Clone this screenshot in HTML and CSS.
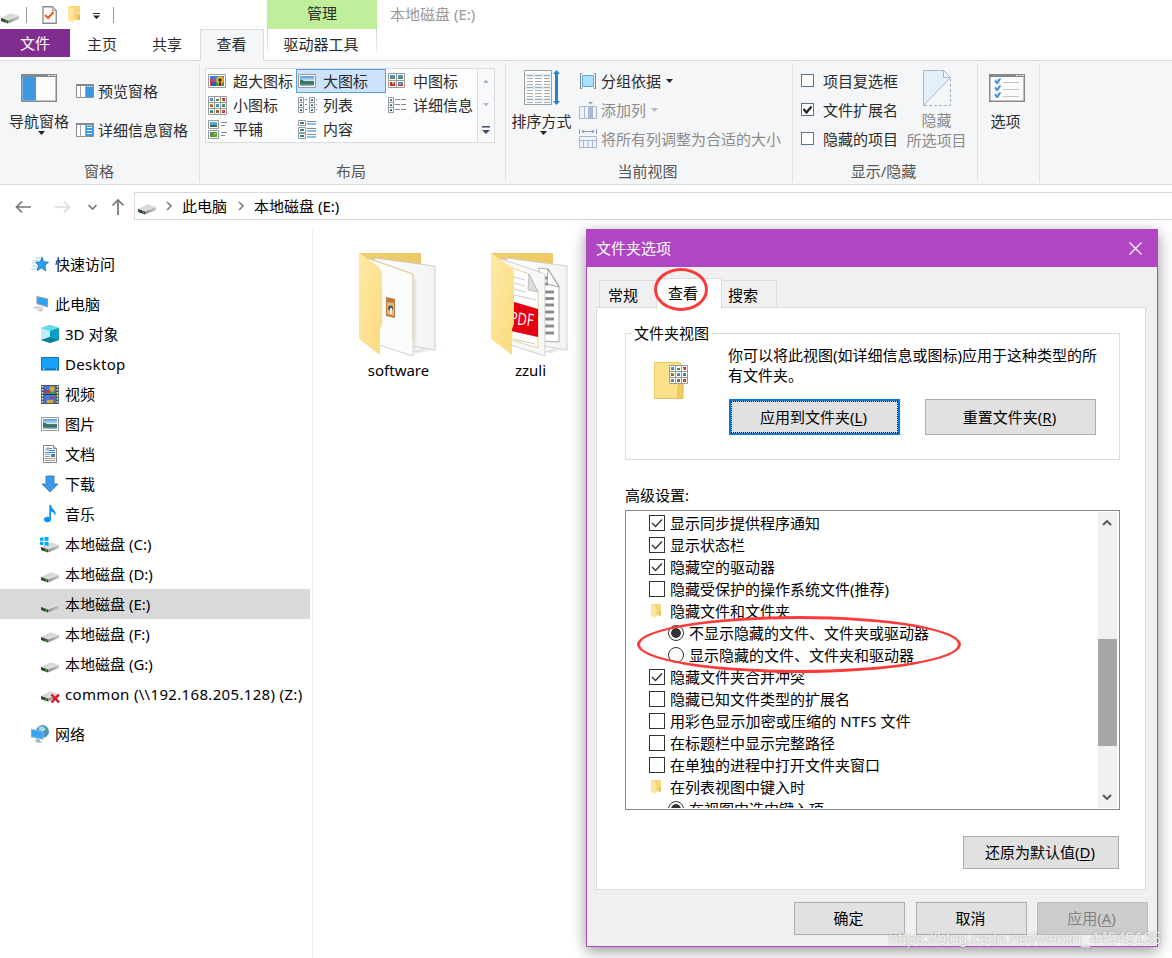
FILE: index.html
```
<!DOCTYPE html>
<html lang="zh-CN">
<head>
    <meta charset="UTF-8">
    <meta name="viewport" content="width=device-width, initial-scale=1.0">
    <title>本地磁盘 (E:)</title>
    <link rel="stylesheet" href="styles.css">
</head>
<body>
    <!-- shared icons -->
    <svg class="sprite" width="0" height="0">
        <defs>
            <linearGradient id="sky" x1="0" y1="0" x2="0" y2="1">
                <stop offset="0" stop-color="#4f95e0"/>
                <stop offset=".5" stop-color="#d6ecfb"/>
                <stop offset=".55" stop-color="#4c7f6a"/>
                <stop offset=".75" stop-color="#3c6c74"/>
                <stop offset="1" stop-color="#9cc4dc"/>
            </linearGradient>
            <linearGradient id="driveTop" x1="0" y1="0" x2="1" y2="1">
                <stop offset="0" stop-color="#c9c9c9"/>
                <stop offset="1" stop-color="#eeeeee"/>
            </linearGradient>
            <linearGradient id="driveSide" x1="0" y1="0" x2="1" y2="0">
                <stop offset="0" stop-color="#8f8f8f"/>
                <stop offset="1" stop-color="#c6c6c6"/>
            </linearGradient>
            <linearGradient id="folderFront" x1="0" y1="0" x2="1" y2="1">
                <stop offset="0" stop-color="#ffe9a6"/>
                <stop offset="1" stop-color="#fada7c"/>
            </linearGradient>
            <linearGradient id="folderBack" x1="0" y1="0" x2="1" y2="0">
                <stop offset="0" stop-color="#f0cd6c"/>
                <stop offset="1" stop-color="#ecca68"/>
            </linearGradient>
            <linearGradient id="paper" x1="0" y1="0" x2="1" y2="0">
                <stop offset="0" stop-color="#ffffff"/>
                <stop offset="1" stop-color="#f3f3f3"/>
            </linearGradient>
            <linearGradient id="shade" x1="0" y1="0" x2="1" y2="0">
                <stop offset="0" stop-color="#bbbbbb"/>
                <stop offset="1" stop-color="#ffffff" stop-opacity="0"/>
            </linearGradient>
        </defs>
        <symbol id="drive" viewBox="0 0 18 12">
            <path d="M0 6L9 1.700Q10 1.500 11 1.700L18 3.700V4.500L7 9Z" fill="url(#driveTop)"/>
            <path d="M0 6L7 8.500V11.500L1 9.500Q0 9 0 8.500Z" fill="#3c403c"/>
            <path d="M7 8.500L18 4V7L7 11.500Z" fill="url(#driveSide)"/>
            <path d="M4.500 8.500h1.500v2h-1.500z" fill="#3fc03f"/>
        </symbol>
        <symbol id="smallFolder" viewBox="0 0 12 17">
            <path d="M1 0H12V14H1Z" fill="#f5d67c"/>
            <path d="M0 0L5.500 2V17L0 14.500Z" fill="#ffe59b"/>
            <path d="M9.500 9h2.500v5H9.500z" fill="#e6bd58"/>
        </symbol>
        <symbol id="picture" viewBox="0 0 18 14">
            <path d="M.5.5h17v13H.5z" fill="#fff" stroke="#999"/>
            <path d="M2 2h14v10H2z" fill="url(#sky)"/>
            <path d="M2 5.500Q4 5 6 7T13 8.500L16 9V10H2Z" fill="#3b7456"/>
        </symbol>
        <symbol id="tile" viewBox="0 0 6 6">
            <path d="M.5.5h5v5h-5z" fill="#fff" stroke="#9a9a9a"/>
            <path d="M2 2h2v1H2z" fill="#5b9bd8"/>
            <path d="M2 3h2v1H2z" fill="#33604e"/>
        </symbol>
        <symbol id="grid9" viewBox="0 0 19 19">
            <path d="M.5.5h18v18H.5z" fill="#fff" stroke="#9a9a9a"/>
            <path d="M6.500 0v19M12.500 0v19M0 6.500h19M0 12.500h19" stroke="#9a9a9a" fill="none"/>
            <path d="M2 2h3v2H2zM8 8h3v2H8zM2 14h3v1H2zM14 8h3v1h-3z" fill="#4d92dc"/>
            <path d="M2 4h3v1H2zM8 3h3v2H8zM8 10h3v1H8zM14 9h3v2h-3zM2 15h3v2H2z" fill="#4b8a55"/>
            <path d="M14 2h3v3h-3zM14 14h3v3h-3z" fill="#c4282b"/>
            <path d="M2 8h3v3H2zM8 14h3v3H8z" fill="#876a35"/>
            <path d="M14 3h1v2h-1zM3 8h2v1H3zM15 15h1v1h-1z" fill="#e8b13b"/>
        </symbol>
        <symbol id="chevron" viewBox="0 0 8 10">
            <path d="M2 1L6 5L2 9" fill="none" stroke="#777" stroke-width="1.500"/>
        </symbol>
        <symbol id="pane" viewBox="0 0 36 28">
            <path d="M.75.75h34.500v26.500H.75z" fill="#fbfbfb" stroke="#85898c" stroke-width="1.500"/>
            <path d="M0 0h36v3H0z" fill="#85898c"/>
            <path d="M27 1h2v1h-2zM30 1h2v1h-2zM33 1h2v1h-2z" fill="#eee"/>
        </symbol>
        <symbol id="check" viewBox="0 0 16 16">
            <path d="M3 8L6.500 11.500L13 4.500" fill="none" stroke="#333" stroke-width="1.400"/>
        </symbol>
    </svg>

    <div class="explorer">
        <header class="header">
            <div class="left-head">
                <div class="quick">
                    <svg class="q-drive" width="18" height="12"><use href="#drive"/></svg>
                    <i class="q-sep"></i>
                    <svg class="q-doc" width="15" height="18" viewBox="0 0 15 18">
                        <path d="M1 .75H10.500L14.250 4.500V17.250H1Z" fill="#fdfdfd" stroke="#8b8b8b" stroke-width="1.300"/>
                        <path d="M10.500 1V4.500H14" fill="#ddd" stroke="#8b8b8b" stroke-width=".8"/>
                        <path d="M3 9L6 12L11.500 6" fill="none" stroke="#f05a1e" stroke-width="2"/>
                    </svg>
                    <svg class="q-folder" width="12" height="17"><use href="#smallFolder"/></svg>
                    <svg class="q-more" width="7" height="6" viewBox="0 0 7 6"><path d="M0 0h7v1H0zM0 2.500h7L3.500 6Z" fill="#222"/></svg>
                    <i class="q-sep"></i>
                </div>
                <nav class="tabs">
                    <div class="tab file">文件</div>
                    <div class="tab">主页</div>
                    <div class="tab">共享</div>
                    <div class="tab active">查看</div>
                </nav>
            </div>
            <div class="context">
                <div class="context-title">管理</div>
                <div class="context-tab">驱动器工具</div>
            </div>
            <div class="title">本地磁盘 (E:)</div>
        </header>

        <section class="ribbon">
            <div class="group g-panes">
                <div class="group-body">
                    <div class="big">
                        <svg width="36" height="28" viewBox="0 0 36 28"><use href="#pane"/><path d="M1.500 3H14V26.500H1.500Z" fill="#3f97e0"/><path d="M14 3h1v23.500h-1z" fill="#85898c"/></svg>
                        <span>导航窗格</span>
                        <svg class="caret" width="7" height="4" viewBox="0 0 7 4"><path d="M0 0H7L3.500 4Z" fill="#222"/></svg>
                    </div>
                    <div class="rows pane-rows">
                        <div class="row">
                            <svg width="18" height="14" viewBox="0 0 18 14"><path d="M.5.5h17v13H.5z" fill="#fff" stroke="#8a8d90"/><path d="M0 0h18v2H0z" fill="#85898c"/><path d="M4.500 2v12M9.500 2v12" stroke="#a5a5a5"/><path d="M10 2.500h7V13h-7z" fill="#3f97e0"/></svg>
                            <span>预览窗格</span>
                        </div>
                        <div class="row">
                            <svg width="18" height="14" viewBox="0 0 18 14"><path d="M.5.5h17v13H.5z" fill="#fff" stroke="#8a8d90"/><path d="M0 0h18v2H0z" fill="#85898c"/><path d="M4.500 2v12M9.500 2v12" stroke="#a5a5a5"/><path d="M10 2.500h7V13h-7z" fill="#3f97e0"/><path d="M11 4.500h5M11 7.500h5M11 10.500h5" stroke="#fff"/></svg>
                            <span>详细信息窗格</span>
                        </div>
                    </div>
                </div>
                <div class="group-name">窗格</div>
            </div>

            <div class="group g-layout">
                <div class="gallery">
                    <div class="views">
                        <div class="view">
                            <svg width="19" height="19" viewBox="0 0 19 19"><path d="M.5 2.500h17v13H.5z" fill="#fff" stroke="#999"/><path d="M2 4h14v10H2z" fill="#3a7fe0"/><path d="M2 10h14v4H2z" fill="#3d9c3f"/><path d="M2 7l2-2 1 3 2 1v5H2z" fill="#d83b3b"/><path d="M3 10h5v4H3z" fill="#3058c8"/><circle cx="12" cy="8" r="3.700" fill="#eeb51f"/><circle cx="12" cy="8" r="1.700" fill="#462414"/><path d="M11 10h2v4h-2z" fill="#a82020"/></svg>
                            <span>超大图标</span>
                        </div>
                        <div class="view selected">
                            <svg width="19" height="19" viewBox="0 0 19 19"><use href="#picture" x="0" y="2" width="18" height="14"/></svg>
                            <span>大图标</span>
                        </div>
                        <div class="view">
                            <svg width="19" height="19" viewBox="0 0 19 19"><path d="M.5 1.500h16v14H.5z" fill="#fff" stroke="#999"/><path d="M8.500 1v15M0 8.500h17" stroke="#999"/><path d="M2 3h5v2H2zM10 3h5v2h-5zM10 10h5v2h-5z" fill="#4d92dc"/><path d="M2 5h5v2H2zM10 5h5v2h-5z" fill="#5c8a58"/><path d="M2 10h5v4H2zM10 12h5v2h-5z" fill="#bd3030"/><path d="M4 10h2v2H4zM11 12h2v1h-2z" fill="#e7b92f"/></svg>
                            <span>中图标</span>
                        </div>
                        <div class="view">
                            <svg width="19" height="19"><use href="#grid9"/></svg>
                            <span>小图标</span>
                        </div>
                        <div class="view">
                            <svg width="19" height="19" viewBox="0 0 19 19"><use href="#tile" y="1" width="6" height="6"/><use href="#tile" y="6" width="6" height="6"/><use href="#tile" y="11" width="6" height="6"/><use href="#tile" x="11" y="1" width="6" height="6"/><use href="#tile" x="11" y="6" width="6" height="6"/><use href="#tile" x="11" y="11" width="6" height="6"/><path d="M7 3.500h2M7 8.500h2M7 13.500h2M18 3.500h1M18 8.500h1M18 13.500h1" stroke="#888"/></svg>
                            <span>列表</span>
                        </div>
                        <div class="view">
                            <svg width="19" height="19" viewBox="0 0 19 19"><use href="#tile" y="1" width="6" height="6"/><use href="#tile" y="6" width="6" height="6"/><use href="#tile" y="11" width="6" height="6"/><path d="M7 3.500h5M13 3.500h5M7 8.500h5M13 8.500h5M7 13.500h5M13 13.500h5" stroke="#888"/></svg>
                            <span>详细信息</span>
                        </div>
                        <div class="view">
                            <svg width="19" height="19" viewBox="0 0 19 19"><path d="M.5.5h10v8H.5zM.5 10.500h10v8H.5z" fill="#fff" stroke="#999"/><path d="M2 2h7v3H2z" fill="#5ba3df"/><path d="M2 5h7v2H2z" fill="#366b58"/><path d="M2 12h7v5H2z" fill="#4ca03c"/><path d="M2 12h2v2H2z" fill="#3c70d0"/><path d="M6 13h2v2H6z" fill="#e3a324"/><path d="M13 2.500h6M13 5.500h4M13 12.500h6M13 15.500h4" stroke="#888"/></svg>
                            <span>平铺</span>
                        </div>
                        <div class="view">
                            <svg width="19" height="19" viewBox="0 0 19 19"><path d="M.5.5h7v5h-7zM.5 7.500h7v5h-7zM.5 13.500h7v5h-7z" fill="#fff" stroke="#999"/><path d="M2 2h4v2H2zM2 9h4v2H2zM2 15h4v2H2z" fill="#3c8090"/><path d="M9 1.500h9M9 8.500h9M9 14.500h9" stroke="#888"/><path d="M9 4h9M9 11h9M9 17h9" stroke="#6aa5ec" stroke-width="1.500"/></svg>
                            <span>内容</span>
                        </div>
                    </div>
                    <div class="spin">
                        <svg width="6" height="4" viewBox="0 0 6 4"><path d="M0 4H6L3 .5Z" fill="#b2b8c4"/></svg>
                        <svg width="6" height="4" viewBox="0 0 6 4"><path d="M0 0H6L3 3.500Z" fill="#b2b8c4"/></svg>
                        <svg width="8" height="8" viewBox="0 0 8 8"><path d="M0 0H8V1.500H0zM0 4H8L4 8Z" fill="#3d5069"/></svg>
                    </div>
                </div>
                <div class="group-name">布局</div>
            </div>

            <div class="group g-current">
                <div class="group-body">
                    <div class="big sort">
                        <svg width="36" height="36" viewBox="0 0 36 36"><path d="M.5.5h27v34H.5z" fill="#fdfdfd" stroke="#a0a0a0"/><path d="M1 4h26v3H1zM1 16h26v3H1zM1 28h26v3H1z" fill="#d9ecf6"/><path d="M3 5.500h6M11 5.500h7M20 5.500h6M3 8.500h6M11 8.500h7M20 8.500h6M3 11.500h6M11 11.500h7M20 11.500h6M3 14.500h6M11 14.500h7M20 14.500h6M3 17.500h6M11 17.500h7M20 17.500h6M3 20.500h6M11 20.500h7M20 20.500h6M3 23.500h6M11 23.500h7M20 23.500h6M3 26.500h6M11 26.500h7M20 26.500h6M3 29.500h6M11 29.500h7M20 29.500h6M3 32.500h6M11 32.500h7M20 32.500h6" stroke="#aaa"/><path d="M32.500 0L36 4H34V31H36L32.500 35L29 31H31V4H29Z" fill="#2383cf"/></svg>
                        <span>排序方式</span>
                        <svg class="caret" width="7" height="4" viewBox="0 0 7 4"><path d="M0 0H7L3.500 4Z" fill="#222"/></svg>
                    </div>
                    <div class="rows">
                        <div class="row">
                            <svg width="18" height="18" viewBox="0 0 18 18"><path d="M3 1.500H1.500V16.500H3M15 1.500H16.500V16.500H15" fill="none" stroke="#7f8890"/><path d="M3.500 3.500h11v11h-11z" fill="#ade0ff" stroke="#61a8de"/></svg>
                            <span>分组依据</span>
                            <svg class="row-caret" width="7" height="4" viewBox="0 0 7 4"><path d="M0 0H7L3.500 4Z" fill="#222"/></svg>
                        </div>
                        <div class="row off">
                            <svg width="18" height="18" viewBox="0 0 18 18"><path d="M.5 5.500h17v12H.5z" fill="#eef3fb" stroke="#a8b6d0"/><path d="M9 5h4v13H9z" fill="#a9b9d8"/><path d="M5.500 5v13M13.500 5v13" stroke="#a8b6d0"/><path d="M9 1h5l-2.500 2.500Z" fill="#8ea2c4"/></svg>
                            <span>添加列</span>
                            <svg class="row-caret" width="7" height="4" viewBox="0 0 7 4"><path d="M0 0H7L3.500 4Z" fill="#b9b9b9"/></svg>
                        </div>
                        <div class="row off">
                            <svg width="18" height="19" viewBox="0 0 18 19"><path d="M.5 7.500h17v11H.5z" fill="#eef3fb" stroke="#a8b6d0"/><path d="M0 11.500h18M4.500 12v7M9 12v7M13.500 12v7" stroke="#a8b6d0" fill="none"/><path d="M.5 0v5M17.500 0v5M3 2.500h12M5 .5l-2 2 2 2M13 .5l2 2-2 2" stroke="#8197bd" fill="none"/></svg>
                            <span>将所有列调整为合适的大小</span>
                        </div>
                    </div>
                </div>
                <div class="group-name">当前视图</div>
            </div>

            <div class="group g-show">
                <div class="group-body">
                    <div class="rows">
                        <div class="row"><i class="box"></i><span>项目复选框</span></div>
                        <div class="row"><i class="box"><svg width="11" height="11" viewBox="0 0 11 11"><path d="M1.500 5L4.500 8.500L9.500 2.500" fill="none" stroke="#222" stroke-width="2.200"/></svg></i><span>文件扩展名</span></div>
                        <div class="row"><i class="box"></i><span>隐藏的项目</span></div>
                    </div>
                    <div class="big hide off">
                        <svg width="28" height="36" viewBox="0 0 28 36"><path d="M.5.5H20.500L27.500 7.500L.5 35.500Z" fill="#e5effb" stroke="#a7b8d2"/><path d="M20.500.5V7.500H27.500Z" fill="#f6f9fd" stroke="#a7b8d2"/><path d="M27.500 9V35.500H1" fill="none" stroke="#9caec9" stroke-dasharray="3 2"/></svg>
                        <span>隐藏<br>所选项目</span>
                    </div>
                </div>
                <div class="group-name">显示/隐藏</div>
            </div>

            <div class="group g-options">
                <div class="big">
                    <svg width="36" height="28" viewBox="0 0 36 28"><use href="#pane"/><path d="M6 5h5v5H6zM6 12h5v5H6zM6 19h5v5H6z" fill="#cfe2f2"/><path d="M6 6.500L8 9L11.500 4.500M6 13.500L8 16L11.500 11.500M6 20.500L8 23L11.500 18.500" fill="none" stroke="#2c8ad6" stroke-width="1.600"/><path d="M14 8.500h16M14 15.500h16M14 22.500h16" stroke="#c4c4c4"/></svg>
                    <span>选项</span>
                </div>
            </div>
        </section>

        <div class="address">
            <div class="nav-buttons">
                <svg width="110" height="18" viewBox="0 0 110 18" fill="none" stroke-width="1.700">
                    <path d="M16 9H1.500M7 3.500L1.500 9L7 14.500" stroke="#777"/>
                    <path d="M40 9H54.500M49 3.500L54.500 9L49 14.500" stroke="#dcdcdc"/>
                    <path d="M73.500 7L77.500 11L81.500 7" stroke="#777"/>
                    <path d="M103 17V2M97.500 7.500L103 2L108.500 7.500" stroke="#777"/>
                </svg>
            </div>
            <div class="path">
                <svg width="18" height="12"><use href="#drive"/></svg>
                <svg class="chev" width="8" height="10"><use href="#chevron"/></svg>
                <span>此电脑</span>
                <svg class="chev" width="8" height="10"><use href="#chevron"/></svg>
                <span>本地磁盘 (E:)</span>
            </div>
        </div>

        <main class="content">
            <aside class="sidebar">
                <div class="item root">
                    <svg width="18" height="18" viewBox="0 0 18 18"><path d="M11 2L12.700 6.800L17.500 7.200L14 10.500L15 16L10.500 13L6 15.500L7.500 10.500L4.500 7.200L9.200 6.800Z" fill="#2fa0ea" stroke="#1474c0" stroke-width=".8"/><path d="M4 3h5M2 5.500h5M1 8h3M1 11h5M0 14h5" stroke="#8cc8ee" stroke-width=".8"/></svg>
                    <span>快速访问</span>
                </div>
                <div class="item root gap">
                    <svg width="20" height="18" viewBox="0 0 20 18"><path d="M6 0L19 3V13L6 9Z" fill="#9a9fa5"/><path d="M7 1.500L18 4V11.500L7 8Z" fill="#2aa3f5"/><path d="M1 13L9 11L15 13.500L8 16Z" fill="#d5d9de"/><path d="M8 16l5-1.500v2l-3 1z" fill="#b8bcc0"/></svg>
                    <span>此电脑</span>
                </div>
                <div class="item">
                    <svg width="18" height="18" viewBox="0 0 18 18"><path d="M9 0L18 3V15L9 18L0 15V3Z" fill="#30b7d0"/><path d="M9 0L18 3L9 6L0 3Z" fill="#65dce8"/><path d="M0 3L9 6V12L0 15Z" fill="#bfeff2"/><path d="M18 3L9 6V12L18 15Z" fill="#089fc5"/><path d="M0 15L9 12L18 15L9 18Z" fill="#107f9d"/></svg>
                    <span>3D 对象</span>
                </div>
                <div class="item">
                    <svg width="18" height="14" viewBox="0 0 18 14"><path d="M.5.5h17v12H.5z" fill="#18a0fb" stroke="#0878c8"/><path d="M0 11.500h18v2H0z" fill="#0a70ba"/><path d="M2 12h1.500M15 12h1" stroke="#fff"/></svg>
                    <span class="wide">Desktop</span>
                </div>
                <div class="item">
                    <svg width="18" height="19" viewBox="0 0 18 19"><path d="M0 0h18v19H0z" fill="#555"/><path d="M3.500 1h11v17h-11z" fill="#3e7de0"/><path d="M3.500 9h11v1h-11z" fill="#222f44"/><circle cx="11" cy="4" r="2.700" fill="#e3a52b"/><path d="M4 5h5v3H4zM9 12h4v2H9z" fill="#c73545"/><path d="M9 7h5v2H9z" fill="#3d9c3f"/><path d="M6 15h6v3H6z" fill="#d8aa30"/><path d="M1.500 1v18M16.500 1v18" stroke="#eee" stroke-width="1.500" stroke-dasharray="1.500 1.500"/></svg>
                    <span>视频</span>
                </div>
                <div class="item">
                    <svg width="18" height="14"><use href="#picture"/></svg>
                    <span>图片</span>
                </div>
                <div class="item">
                    <svg width="18" height="18" viewBox="0 0 18 18"><path d="M2.500.5H12.500L15.500 3.500V17.500H2.500Z" fill="#fff" stroke="#888"/><path d="M12.500 .5V3.500H15.500" fill="#ddd" stroke="#888"/><path d="M4.500 5.500L7 2.500V6M8 3.500h3M8 5.500h6M4 7.500h10" stroke="#338ed1" fill="none"/><path d="M4 9.500h5M4 11.500h5M4 13.500h10M4 15.500h10" stroke="#999"/><path d="M10 9h4v3h-4z" fill="#4a7c9e"/></svg>
                    <span>文档</span>
                </div>
                <div class="item">
                    <svg width="18" height="18" viewBox="0 0 18 18"><path d="M5 1H13V9H17L9 17L1 9H5Z" fill="#3b9be8" stroke="#2276bd" stroke-width=".8"/></svg>
                    <span>下载</span>
                </div>
                <div class="item">
                    <svg width="18" height="18" viewBox="0 0 18 18"><ellipse cx="6.500" cy="14.500" rx="3.500" ry="2.700" fill="#0c93ee"/><path d="M8.300 0H10Q10.500 3 13 5T14 11Q13.500 7 10 6.500V15H8.300Z" fill="#0c93ee"/></svg>
                    <span>音乐</span>
                </div>
                <div class="item disk sys">
                    <svg width="19" height="16" viewBox="0 0 19 16"><use href="#drive" x="1" y="4" width="18" height="12"/><path d="M0 .8L3.500.3V3.800H0zM4.500.2L8.500 -.3V3.800H4.500zM0 4.800H3.500V8.300L0 7.800zM4.500 4.800H8.500V8.800L4.500 8.300z" fill="#00adef"/></svg>
                    <span>本地磁盘 (C:)</span>
                </div>
                <div class="item disk"><svg width="18" height="12"><use href="#drive"/></svg><span>本地磁盘 (D:)</span></div>
                <div class="item disk current"><svg width="18" height="12"><use href="#drive"/></svg><span>本地磁盘 (E:)</span></div>
                <div class="item disk"><svg width="18" height="12"><use href="#drive"/></svg><span>本地磁盘 (F:)</span></div>
                <div class="item disk"><svg width="18" height="12"><use href="#drive"/></svg><span>本地磁盘 (G:)</span></div>
                <div class="item disk net">
                    <svg width="19" height="14" viewBox="0 0 19 14"><use href="#drive" x="0" y="0" width="18" height="12"/><path d="M10.500 4.500L18 12.500M18 4.500L10.500 12.500" stroke="#dc1420" stroke-width="2.500"/></svg>
                    <span class="wide">common (\\192.168.205.128) (Z:)</span>
                </div>
                <div class="item root gap">
                    <svg width="18" height="18" viewBox="0 0 18 18"><circle cx="11.500" cy="6.500" r="6.500" fill="#4a95b4"/><path d="M8 2Q12 0 14 3T11 6L8 5Z" fill="#a9d7e5"/><path d="M0 4L12 6.500V14.500L0 12Z" fill="#3aa5ee" stroke="#a9cce4" stroke-width=".7"/><path d="M5 13.500l4 1v1.500l3 1-5 1-3-2 1-1z" fill="#adb4ba"/></svg>
                    <span>网络</span>
                </div>
            </aside>

            <div class="files">
                <figure class="file-item">
                    <svg width="90" height="106" viewBox="0 0 90 106">
                        <path d="M54 100L76 90L88 95L60 101Z" fill="url(#shade)" opacity=".6"/>
                        <path d="M0 1H62V40H0Z" fill="url(#folderBack)"/>
                        <path d="M15 6L76 14V98L40 92Z" fill="url(#paper)" stroke="#c5c5c5" stroke-width=".8"/>
                        <path d="M8 6L54 22V104L20 93V20Z" fill="#fcfcfc" stroke="#c5c5c5" stroke-width=".8"/>
                        <path d="M9 6L54 22V88" fill="none" stroke="#ead08a"/>
                        <path d="M55 26L60 30V98L55 103Z" fill="url(#shade)" opacity=".45"/>
                        <path d="M27 45L36 47V66L27 64Z" fill="#ba7b3b"/><path d="M28 50L35 51V64L28 62Z" fill="#dfb779"/>
                        <circle cx="31.500" cy="56" r="2.500" fill="#555"/><path d="M31 56h2v6h-2z" fill="#eee"/>
                        <path d="M0 1L20 15L23 21V72L21 77V103L0 87Z" fill="url(#folderFront)"/>
                    </svg>
                    <figcaption>software</figcaption>
                </figure>
                <figure class="file-item">
                    <svg width="90" height="106" viewBox="0 0 90 106">
                        <path d="M54 100L76 90L88 95L60 101Z" fill="url(#shade)" opacity=".6"/>
                        <path d="M0 1H62V40H0Z" fill="url(#folderBack)"/>
                        <path d="M15 6L76 14V98L40 92Z" fill="url(#paper)" stroke="#c5c5c5" stroke-width=".8"/>
                        <path d="M48 16L57 17L68 34V90L48 89Z" fill="#fff" stroke="#aaa"/>
                        <path d="M57 17L56 32L68 35Z" fill="#fff" stroke="#888" stroke-width=".8"/>
                        <path d="M53 26h4M53 32h4M53 40h10M53 46.500h10M53 53h10M53 60h10M53 67h10M53 74h10M53 81h10" stroke="#8b8b8b" stroke-width="3"/>
                        <path d="M8 6L54 22V104L20 93V20Z" fill="#f7f7f7" stroke="#c5c5c5" stroke-width=".8"/>
                        <path d="M21 16L38 22L47 40V96L21 88Z" fill="#fff" stroke="#e4c878" stroke-width=".8"/>
                        <path d="M38 22L37 38L47 40Z" fill="#ddd" stroke="#aaa" stroke-width=".7"/>
                        <path d="M23 25l11 3M23 31l11 3M23 37l12 3M23 43l22 5M23 87l21 5" stroke="#ccc"/>
                        <path d="M20 49L47 57V85L20 79Z" fill="#e60012"/>
                        <text x="18" y="72" class="pdf" textLength="24" lengthAdjust="spacingAndGlyphs" transform="rotate(7 22 72)">PDF</text>
                        <path d="M0 1L20 15L23 21V72L21 77V103L0 87Z" fill="url(#folderFront)"/>
                    </svg>
                    <figcaption>zzuli</figcaption>
                </figure>
            </div>
        </main>
    </div>

    <div class="dialog">
        <div class="dialog-title">
            <span>文件夹选项</span>
            <svg width="13" height="13" viewBox="0 0 13 13"><path d="M.5.5L12.500 12.500M12.500.5L.5 12.500" stroke="#fff" stroke-width="1.200"/></svg>
        </div>
        <div class="dialog-tabs">
            <div class="dtab">常规</div>
            <div class="dtab on">查看</div>
            <div class="dtab">搜索</div>
        </div>
        <div class="page">
            <div class="folder-views">
                <div class="legend">文件夹视图</div>
                <svg class="fv-icon" width="36" height="38" viewBox="0 0 36 38"><path d="M.5.5h26v36H.5z" fill="#fde08a" stroke="#ecca66"/><path d="M24 24l2-2h3v14.500h-5z" fill="#f3cd68" stroke="#e0b84e"/><path d="M1 36.500h28" stroke="#e5be58"/><use href="#grid9" x="15" y="3" width="19" height="19"/></svg>
                <div class="fv-text">
                    <p>你可以将此视图(如详细信息或图标)应用于这种类型的所有文件夹。</p>
                    <div class="fv-buttons">
                        <button class="btn focus">应用到文件夹(<u>L</u>)</button>
                        <button class="btn">重置文件夹(<u>R</u>)</button>
                    </div>
                </div>
            </div>
            <div class="adv-label">高级设置:</div>
            <div class="adv">
                <div class="adv-list">
                    <div class="opt"><i class="cb"><svg width="14" height="14" viewBox="1 1 14 14"><use href="#check" width="16" height="16"/></svg></i>显示同步提供程序通知</div>
                    <div class="opt"><i class="cb"><svg width="14" height="14" viewBox="1 1 14 14"><use href="#check" width="16" height="16"/></svg></i>显示状态栏</div>
                    <div class="opt"><i class="cb"><svg width="14" height="14" viewBox="1 1 14 14"><use href="#check" width="16" height="16"/></svg></i>隐藏空的驱动器</div>
                    <div class="opt"><i class="cb"></i>隐藏受保护的操作系统文件(推荐)</div>
                    <div class="opt"><svg class="fold" width="10" height="14"><use href="#smallFolder"/></svg>隐藏文件和文件夹</div>
                    <div class="opt sub"><i class="rb checked"></i>不显示隐藏的文件、文件夹或驱动器</div>
                    <div class="opt sub"><i class="rb"></i>显示隐藏的文件、文件夹和驱动器</div>
                    <div class="opt"><i class="cb"><svg width="14" height="14" viewBox="1 1 14 14"><use href="#check" width="16" height="16"/></svg></i>隐藏文件夹合并冲突</div>
                    <div class="opt"><i class="cb"></i>隐藏已知文件类型的扩展名</div>
                    <div class="opt wide"><i class="cb"></i>用彩色显示加密或压缩的 NTFS 文件</div>
                    <div class="opt"><i class="cb"></i>在标题栏中显示完整路径</div>
                    <div class="opt"><i class="cb"></i>在单独的进程中打开文件夹窗口</div>
                    <div class="opt"><svg class="fold" width="10" height="14"><use href="#smallFolder"/></svg>在列表视图中键入时</div>
                    <div class="opt sub"><i class="rb checked"></i>在视图中选中键入项</div>
                </div>
                <div class="scroll">
                    <svg width="10" height="7" viewBox="0 0 10 7"><path d="M1 6L5 2L9 6" fill="none" stroke="#555" stroke-width="1.900"/></svg>
                    <div class="thumb"></div>
                    <svg width="10" height="7" viewBox="0 0 10 7"><path d="M1 1L5 5L9 1" fill="none" stroke="#555" stroke-width="1.900"/></svg>
                </div>
            </div>
            <button class="btn restore">还原为默认值(<u>D</u>)</button>
        </div>
        <div class="dialog-buttons">
            <button class="btn">确定</button>
            <button class="btn">取消</button>
            <button class="btn" disabled>应用(<u>A</u>)</button>
        </div>
        <div class="mark mark-tab"></div>
        <div class="mark mark-radio"></div>
    </div>
    <div class="watermark">https://blog.csdn.net/weixin_44949135</div>
</body>
</html>
```
FILE: styles.css
```
* {
    box-sizing: border-box;
}
body {
    margin: 0;
    width: 1172px;
    height: 958px;
    overflow: hidden;
    position: relative;
    background: #fff;
    color: #000;
    font: 15px/20px "Noto Sans", "Noto Sans CJK SC", sans-serif;
}
svg {
    display: block;
    flex: none;
}
i {
    display: block;
    flex: none;
}
.sprite {
    position: absolute;
}
.explorer {
    height: 958px;
    display: flex;
    flex-direction: column;
}

/* title and tabs */
.header {
    height: 61px;
    display: flex;
    border-bottom: 1px solid #dadbdc;
}
.left-head {
    width: 267px;
}
.quick {
    height: 29px;
    display: flex;
    align-items: center;
    padding-left: 1px;
}
.q-drive {
    margin-top: 6px;
}
.q-sep {
    width: 1px;
    height: 16px;
    background: #999;
    margin-left: 7px;
}
.q-doc {
    margin-left: 15px;
}
.q-folder {
    margin-left: 11px;
}
.q-more {
    margin-left: 13px;
    margin-top: 3px;
}
.q-more + .q-sep {
    margin-left: 13px;
}
.tabs {
    display: flex;
    height: 32px;
    color: #2b2b2b;
}
.tab {
    width: 65px;
    height: 31px;
    padding: 0 1px 2px 0;
    display: flex;
    align-items: center;
    justify-content: center;
}
.tab.file {
    width: 70px;
    height: 28px;
    padding: 0;
    background: #7f2e90;
    color: #fff;
}
.tab.active {
    width: 64px;
    height: 32px;
    padding-bottom: 3px;
    background: #f5f6f7;
    border: 1px solid #dadbdc;
    border-bottom: 0;
}
.context {
    width: 110px;
    text-align: center;
    color: #2b2b2b;
}
.context-title {
    height: 29px;
    line-height: 27px;
    background: #c0ef9c;
}
.context-tab {
    height: 24px;
    line-height: 30px;
    padding-right: 2px;
    border: solid #dadbdc;
    border-width: 0 1px;
    border-image: linear-gradient(#cfcfcf, #f2f2f2) 1;
    border-image-width: 0 1px;
}
.title {
    padding-left: 13px;
    line-height: 29px;
    color: #999;
}

/* ribbon */
.ribbon {
    height: 124px;
    display: flex;
    background: #f5f6f7;
    border-bottom: 1px solid #dadbdc;
    color: #2b2b2b;
}
.group {
    height: 119px;
    margin-top: 2px;
    border-right: 1px solid #e2e3e4;
    display: flex;
    flex-direction: column;
}
.g-panes {
    width: 200px;
}
.g-layout {
    width: 306px;
}
.g-current {
    width: 287px;
}
.g-show {
    width: 185px;
}
.g-options {
    width: 62px;
}
.group-body {
    display: flex;
    height: 98px;
}
.group-name {
    margin-top: auto;
    padding: 0 3px 1px 0;
    text-align: center;
    color: #555;
}
.g-panes .group-name {
    padding-right: 1px;
}
.big {
    width: 78px;
    padding-top: 11px;
    display: flex;
    flex-direction: column;
    align-items: center;
}
.big span {
    margin-top: 9px;
    white-space: nowrap;
    text-align: center;
}
.big .caret {
    margin-left: 4px;
}
.big.sort {
    width: 71px;
    padding-top: 7px;
    margin-right: 2px;
}
.big.sort span,
.big.hide span {
    margin-top: 5px;
}
.big.hide {
    width: 77px;
    padding-top: 7px;
}
.big.hide span {
    margin-top: 4px;
}
.g-options .big {
    width: 57px;
}
.g-options .big span {
    margin-right: 2px;
}
.rows {
    display: flex;
    flex-direction: column;
    padding-top: 3px;
}
.row {
    height: 29px;
    display: flex;
    align-items: center;
    gap: 4px;
    white-space: nowrap;
}
.row-caret {
    margin-left: 1px;
}
.pane-rows {
    padding-top: 8px;
    margin-left: -2px;
}
.pane-rows .row {
    height: 39px;
}
.off {
    color: #8b8b8b;
}
.gallery {
    margin: 5px 0 0 5px;
    width: 290px;
    height: 75px;
    display: flex;
    border: 1px solid #dadbdc;
    background: #fcfdfe;
}
.views {
    display: grid;
    grid-template-columns: 90px 90px 91px;
    grid-template-rows: repeat(3, 24px);
    width: 271px;
}
.view {
    display: flex;
    align-items: center;
    gap: 6px;
    padding-left: 2px;
    white-space: nowrap;
}
.view.selected {
    background: #cde3fb;
    box-shadow: 0 0 0 1px #5b9fe0 inset;
}
.spin {
    flex: 1;
    border-left: 1px solid #dadbdc;
    display: grid;
    grid-template-rows: 1fr 1fr 1fr;
    place-items: center;
    background: #f8f9fa;
}
.g-show .rows {
    padding-left: 8px;
}
.g-show .row {
    gap: 9px;
}
.box {
    width: 13px;
    height: 13px;
    border: 1px solid #5573a3;
    background: #fff;
}

/* address bar */
.address {
    height: 43px;
    display: flex;
    padding-top: 7px;
}
.nav-buttons {
    width: 134px;
    padding: 6px 0 0 15px;
}
.path {
    flex: 1;
    height: 28px;
    border: 1px solid #d9d9d9;
    border-right: 0;
    display: flex;
    align-items: center;
    padding: 0 0 1px 3px;
}
.path > svg:first-child {
    margin-top: 6px;
}
.chev {
    margin: 0 9px;
}
.chev ~ .chev {
    margin-left: 10px;
}

/* navigation pane and files */
.content {
    flex: 1;
    display: flex;
}
.sidebar {
    width: 313px;
    border-right: 1px solid #f0f0f0;
    padding-top: 21px;
}
.item {
    width: 310px;
    height: 30px;
    padding-left: 41px;
    display: flex;
    align-items: center;
    gap: 6px;
    white-space: nowrap;
}
.item.root {
    padding-left: 31px;
}
.item.root svg {
    width: 18px;
}
.item.gap {
    margin-top: 10px;
}
.item.disk svg {
    margin-top: 5px;
}
.item.sys {
    padding-left: 40px;
}
.item.sys svg {
    margin-top: 1px;
}
.item.net svg {
    margin-right: -1px;
}
.item.current {
    background: #d9d9d9;
}
.wide {
    letter-spacing: .33px;
}
.files {
    display: flex;
    padding: 24px 0 0 46px;
}
.file-item {
    margin: 0 42px 0 0;
    width: 90px;
}
.file-item figcaption {
    width: 79px;
    margin-top: 2px;
    text-align: center;
}
.pdf {
    font: 17px "Open Sans", sans-serif;
    fill: #fff;
}

/* folder options */
.dialog {
    position: absolute;
    left: 586px;
    top: 229px;
    width: 572px;
    height: 718px;
    background: #f0f0f0;
    border: 1px solid #b146c2;
    box-shadow: 0 4px 14px rgba(0, 0, 0, .42);
}
.dialog-title {
    height: 37px;
    display: flex;
    align-items: center;
    justify-content: space-between;
    padding: 0 15px 0 9px;
    background: #b146c2;
    color: #fff;
}
.dialog-title span {
    margin-bottom: 2px;
}
.dialog-tabs {
    display: flex;
    align-items: flex-end;
    height: 41px;
    padding-left: 12px;
}
.dtab {
    height: 28px;
    width: 57px;
    padding: 4px 0 0 8px;
    border: 1px solid #dcdcdc;
    border-right: 0;
    border-bottom: 0;
}
.dtab.on {
    width: 66px;
    height: 31px;
    padding-left: 11px;
    margin-bottom: -1px;
    background: #fff;
    border-right: 1px solid #dcdcdc;
    z-index: 1;
}
.dtab:last-child {
    width: 55px;
    padding-left: 6px;
    border-left: 0;
    border-right: 1px solid #dcdcdc;
}
.page {
    margin-left: 9px;
    width: 550px;
    height: 583px;
    margin-top: -1px;
    background: #fff;
    border: 1px solid #dcdcdc;
    padding: 25px 25px 0 28px;
    display: flex;
    flex-direction: column;
}
.folder-views {
    position: relative;
    display: flex;
    height: 127px;
    border: 1px solid #dcdcdc;
}
.legend {
    position: absolute;
    left: 6px;
    top: -11px;
    padding: 0 3px 0 2px;
    background: #fff;
}
.fv-icon {
    margin: 28px 0 0 28px;
}
.fv-text {
    margin-left: 38px;
    padding-top: 11px;
}
.fv-text p {
    margin: 0;
    width: 372px;
    line-height: 20px;
    height: 40px;
}
.fv-buttons {
    display: flex;
    gap: 25px;
    margin: 14px 0 0 1px;
}
.btn {
    width: 171px;
    height: 36px;
    padding: 0 2px 0 0;
    border: 1px solid #adadad;
    background: #e1e1e1;
    color: #000;
    font: inherit;
}
.btn u {
    text-underline-offset: 2px;
}
.btn.focus {
    border: 2px solid #0078d7;
    outline: 1px dotted #000;
    outline-offset: -3px;
}
.adv-label {
    margin-top: 25px;
}
.adv {
    margin-top: 5px;
    height: 300px;
    border: 1px solid #828790;
    display: flex;
    justify-content: space-between;
    overflow: hidden;
}
.adv-list {
    padding: 1px 0 0 23px;
    height: 297px;
    overflow: hidden;
}
.opt {
    height: 22px;
    display: flex;
    align-items: center;
    gap: 5px;
    white-space: nowrap;
}
.opt.sub {
    padding-left: 19px;
}
.opt.wide {
    letter-spacing: .12px;
}
.cb {
    width: 16px;
    height: 16px;
    border: 1px solid #333;
}
.fold {
    margin: 0 4px 0 2px;
}
.rb {
    width: 16px;
    height: 16px;
    border: 1px solid #333;
    border-radius: 50%;
}
.rb.checked {
    background: radial-gradient(circle, #333 4.500px, #fff 5.200px);
}
.scroll {
    width: 19px;
    margin: 1px 2px 1px 0;
    background: #f0f0f0;
    display: flex;
    flex-direction: column;
    align-items: center;
    padding: 7px 0;
}
.scroll svg {
    margin-right: 1px;
}
.thumb {
    width: 19px;
    height: 107px;
    margin: 113px 0 auto;
    background: #a6a6a6;
}
.restore {
    width: 156px;
    height: 33px;
    margin: 26px 1px 0 0;
    align-self: flex-end;
}
.restore,
.dialog-buttons .btn {
    padding-bottom: 2px;
}
.dialog-buttons {
    display: flex;
    margin: 12px 9px 0 0;
    justify-content: flex-end;
    gap: 11px;
}
.dialog-buttons .btn {
    width: 111px;
    height: 33px;
}
.dialog-buttons .btn:last-child {
    margin-left: -1px;
}
.btn:disabled {
    background: #ccc;
    border-color: #bfbfbf;
    color: #838383;
}
.mark {
    position: absolute;
    border: 3px solid #fb3b3b;
    border-radius: 50%;
    z-index: 2;
}
.mark-tab {
    left: 67px;
    top: 38px;
    width: 54px;
    height: 43px;
}
.mark-radio {
    left: 50px;
    top: 386px;
    width: 324px;
    height: 57px;
}
.watermark {
    position: absolute;
    left: 889px;
    top: 929px;
    color: rgba(255, 255, 255, .75);
    font: 16px/20px "Liberation Sans", sans-serif;
    text-shadow: 0 0 2px rgba(120, 120, 120, .7);
}
```
